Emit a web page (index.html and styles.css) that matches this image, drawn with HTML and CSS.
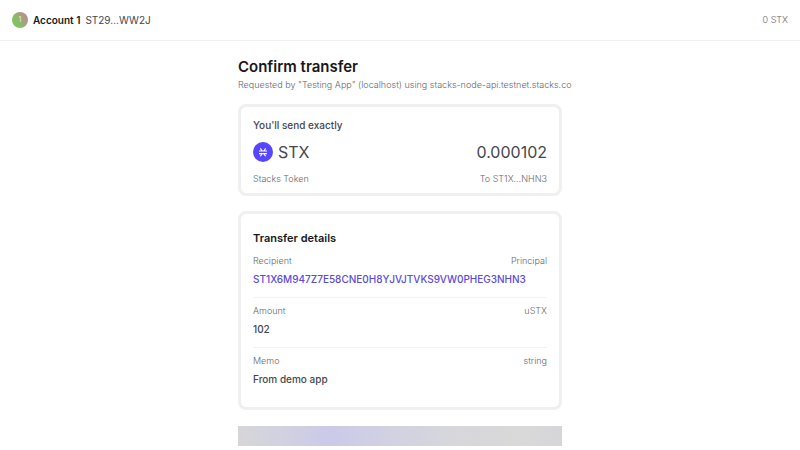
FILE: index.html
```html
<!DOCTYPE html>
<html lang="en">
<head>
<meta charset="utf-8">
<meta name="viewport" content="width=device-width, initial-scale=1">
<title>Confirm transfer</title>
<link rel="stylesheet" href="styles.css">
</head>
<body>
<header class="topbar">
  <div class="account">
    <span class="avatar">1</span>
    <span class="account-name">Account 1</span>
    <span class="account-address">ST29…WW2J</span>
  </div>
  <span class="caption">0 STX</span>
</header>
<main class="page">
  <h1 class="title">Confirm transfer</h1>
  <p class="caption subtitle">Requested by "Testing App" (localhost) using stacks-node-api.testnet.stacks.co</p>

  <section class="card summary">
    <h2 class="summary-label">You'll send exactly</h2>
    <div class="row asset">
      <span class="token">
        <svg class="token-icon" viewBox="0 0 20 20" aria-hidden="true">
          <circle cx="10" cy="10" r="10" fill="#5546ff"/>
          <path d="M6 9h8M6 11.6h8M7.4 6.4l1.7 2.6h1.8l1.7-2.6M7.4 14.2l1.7-2.6h1.8l1.7 2.6" fill="none" stroke="#fff" stroke-width="1.1"/>
        </svg>
        <span>STX</span>
      </span>
      <span>0.000102</span>
    </div>
    <div class="row caption">
      <span>Stacks Token</span>
      <span>To ST1X…NHN3</span>
    </div>
  </section>

  <section class="card details">
    <h2 class="details-title">Transfer details</h2>
    <div class="field">
      <div class="row caption"><span>Recipient</span><span>Principal</span></div>
      <p class="value principal">ST1X6M947Z7E58CNE0H8YJVJTVKS9VW0PHEG3NHN3</p>
    </div>
    <div class="field">
      <div class="row caption"><span>Amount</span><span>uSTX</span></div>
      <p class="value">102</p>
    </div>
    <div class="field">
      <div class="row caption"><span>Memo</span><span>string</span></div>
      <p class="value">From demo app</p>
    </div>
  </section>

  <div class="loading-bar"></div>
</main>
</body>
</html>
```
FILE: styles.css
```css
* {
  box-sizing: border-box;
}

body {
  margin: 0;
  background: #fff;
  color: #45474d;
  font-family: Inter, "Liberation Sans", sans-serif;
  font-size: 10px;
  line-height: 16px;
}

h1, h2, p {
  margin: 0;
}

.topbar {
  display: flex;
  justify-content: space-between;
  align-items: center;
  padding: 12px;
  border-bottom: 1px solid #f0f0f2;
}

.account {
  display: flex;
  align-items: center;
  gap: 5px;
}

.avatar {
  width: 16px;
  height: 16px;
  border-radius: 50%;
  background: linear-gradient(60deg, #86c065 35%, #bd8a94 85%);
  color: #e4f0dc;
  font-size: 7px;
  text-align: center;
}

.account-name {
  color: #17171a;
  font-weight: 600;
}

.caption {
  color: #66676c;
  font-size: 9px;
  font-weight: 300;
}

.page {
  max-width: 324px;
  margin: 0 auto;
  padding-top: 15px;
}

.title {
  color: #17171a;
  font-size: 15px;
  font-weight: 600;
  line-height: 21px;
}

.subtitle {
  white-space: nowrap;
}

.card {
  border: 3px solid #f0f0f2;
  border-radius: 8px;
}

.row {
  display: flex;
  justify-content: space-between;
  align-items: center;
}

.summary {
  margin-top: 11px;
  padding: 10px 12px 6px;
}

.summary-label {
  font-size: 10px;
  font-weight: 500;
}

.asset {
  padding: 9px 0;
  font-size: 16px;
  line-height: 20px;
}

.token {
  display: flex;
  align-items: center;
  gap: 5px;
}

.token-icon {
  width: 20px;
  height: 20px;
}

.details {
  margin-top: 15px;
  padding: 16px 12px 10px;
}

.details-title {
  margin-bottom: 2px;
  color: #17171a;
  font-size: 11px;
  font-weight: 600;
}

.field {
  padding: 5px 0 10px;
}

.field + .field {
  border-top: 1px solid #f3f3f5;
}

.value {
  margin-top: 2px;
  font-weight: 500;
}

.principal {
  color: #5a4bdd;
}

.loading-bar {
  height: 20px;
  margin-top: 16px;
  background: linear-gradient(90deg, #d6d6d9 0%, #d2d2df 12%, #cacae9 28%, #d1d1e2 46%, #d6d6dc 65%, #d9d9d9 88%, #d6d6da 100%);
}
```
